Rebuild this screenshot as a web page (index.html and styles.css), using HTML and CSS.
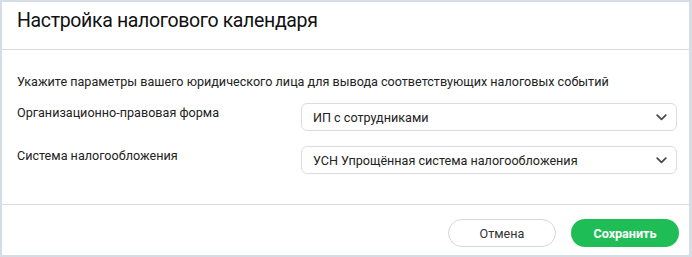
FILE: index.html
```html
<!DOCTYPE html>
<html lang="ru">
<head>
<meta charset="utf-8">
<link rel="stylesheet" href="styles.css">
</head>
<body>
<div class="dialog">
  <div class="dialog-header">
    <h1 class="dialog-title">Настройка налогового календаря</h1>
  </div>
  <div class="dialog-body">
    <p class="hint">Укажите параметры вашего юридического лица для вывода соответствующих налоговых событий</p>
    <div class="form-row">
      <div class="form-label">Организационно-правовая форма</div>
      <div class="select">
        <span class="select-value">ИП с сотрудниками</span>
        <svg class="chevron" width="11" height="7" viewBox="0 0 11 7"><path d="M1.2 1.2 L5.5 5.3 L9.8 1.2" fill="none" stroke="#4a4a4a" stroke-width="1.8" stroke-linecap="round" stroke-linejoin="round"/></svg>
      </div>
    </div>
    <div class="form-row">
      <div class="form-label">Система налогообложения</div>
      <div class="select">
        <span class="select-value">УСН Упрощённая система налогообложения</span>
        <svg class="chevron" width="11" height="7" viewBox="0 0 11 7"><path d="M1.2 1.2 L5.5 5.3 L9.8 1.2" fill="none" stroke="#4a4a4a" stroke-width="1.8" stroke-linecap="round" stroke-linejoin="round"/></svg>
      </div>
    </div>
  </div>
  <div class="dialog-footer">
    <button class="btn btn-cancel">Отмена</button>
    <button class="btn btn-save">Сохранить</button>
  </div>
</div>
</body>
</html>
```
FILE: styles.css
```css
html, body {
  margin: 0;
  padding: 0;
}
body {
  background: #d6dce5;
  font-family: Roboto, "Noto Sans", sans-serif;
  color: #222;
  padding: 2px 3px 2px 2px;
  width: 692px;
  height: 257px;
  box-sizing: border-box;
}
.dialog {
  background: #fff;
  height: 253px;
  display: flex;
  flex-direction: column;
}
.dialog-header {
  height: 48px;
  flex: none;
  border-bottom: 1px solid #d9dde3;
  box-sizing: border-box;
  padding: 7px 15px 0;
}
.dialog-title {
  margin: 0;
  font-size: 19.5px;
  letter-spacing: -0.35px;
  font-weight: 400;
  color: #111;
  line-height: 24px;
}
.dialog-body {
  flex: 1;
  padding: 24px 11px 0 15px;
  border-bottom: 1px solid #d9dde3;
}
.hint {
  margin: 0 0 13px;
  font-size: 12.6px;
  line-height: 16px;
  color: #222;
}
.form-row {
  display: grid;
  grid-template-columns: 284px 376px;
  align-items: start;
  margin-bottom: 15px;
}
.form-label {
  font-size: 12.6px;
  line-height: 16px;
  padding-top: 2px;
  color: #222;
}
.select {
  height: 28px;
  box-sizing: border-box;
  border: 1px solid #d9dde3;
  border-radius: 6px;
  display: flex;
  align-items: center;
  justify-content: space-between;
  padding: 0 9px 0 11px;
}
.select-value {
  font-size: 12.6px;
  color: #222;
}
.chevron {
  display: block;
}
.dialog-footer {
  height: 50px;
  flex: none;
  box-sizing: border-box;
  display: flex;
  justify-content: flex-end;
  align-items: flex-start;
  gap: 15px;
  padding: 14px 10px 0 0;
}
.btn {
  height: 28px;
  width: 108px;
  border-radius: 14px;
  font-family: Roboto, "Noto Sans", sans-serif;
  font-size: 12.6px;
  cursor: pointer;
  padding: 0;
}
.btn-cancel {
  background: #fff;
  border: 1px solid #d3d7dd;
  color: #333;
}
.btn-save {
  background: #1fbd55;
  border: none;
  color: #fff;
  font-weight: 700;
}
```
